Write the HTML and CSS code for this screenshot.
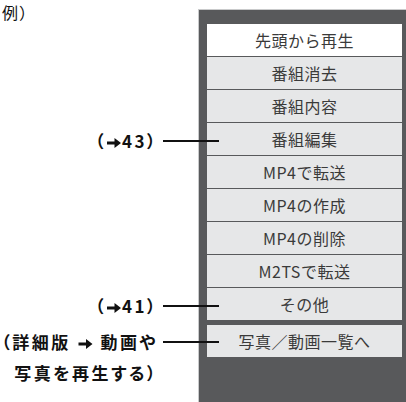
FILE: index.html
```html
<!DOCTYPE html>
<html>
<head>
	<meta charset="utf-8">
	<title>メニュー例</title>
	<link rel="stylesheet" href="styles.css">
</head>
<body>
	<div class="page">
		<div class="notes">
			<p class="example">例）</p>
			<div class="callout callout-edit">
				<p class="callout-text">（<svg class="arrow" viewBox="0 0 14 10"><path d="M0 3.5h7.5V0L14 5l-6.5 5V6.5H0z"/></svg>43）</p>
				<span class="leader"></span>
			</div>
			<div class="callout callout-other">
				<p class="callout-text">（<svg class="arrow" viewBox="0 0 14 10"><path d="M0 3.5h7.5V0L14 5l-6.5 5V6.5H0z"/></svg>41）</p>
				<span class="leader"></span>
			</div>
			<div class="callout callout-photo">
				<p class="callout-text">（詳細版 <svg class="arrow arrow-wide" viewBox="0 0 14 10"><path d="M0 3.5h7.5V0L14 5l-6.5 5V6.5H0z"/></svg> 動画や<br>写真を再生する）</p>
				<span class="leader"></span>
			</div>
		</div>

		<div class="panel">
			<div class="item item-first">先頭から再生</div>
			<div class="item">番組消去</div>
			<div class="item">番組内容</div>
			<div class="item">番組編集</div>
			<div class="item">MP4で転送</div>
			<div class="item">MP4の作成</div>
			<div class="item">MP4の削除</div>
			<div class="item">M2TSで転送</div>
			<div class="item">その他</div>
			<div class="item item-photo">写真／動画一覧へ</div>
		</div>
	</div>
</body>
</html>
```

FILE: styles.css
```css
body{
	margin: 0;
	background-color: #fff;
	font-family: "Noto Sans CJK JP", "Noto Sans", sans-serif;
	color: #111;
}
.page{
	display: flex;
	width: 406px;
	height: 402px;
	overflow: hidden;
}
.notes{
	width: 198px;
	flex-shrink: 0;
	display: grid;
	grid-template-rows: 24px 32px repeat(8, 33px) 5px 32px 1fr;
}
.example{
	margin: 0 0 0 2px;
	font-size: 16px;
	line-height: 24px;
	letter-spacing: 1px;
}
.callout{
	display: flex;
	justify-content: flex-end;
	align-items: flex-start;
	padding-top: 3px;
}
.callout-edit{
	grid-row: 5;
}
.callout-other{
	grid-row: 10;
}
.callout-photo{
	grid-row: 12 / span 2;
	padding-top: 1px;
}
.callout-text{
	margin: 0;
	font-size: 17px;
	font-weight: 700;
	line-height: 31px;
	letter-spacing: 2.5px;
	text-align: right;
	white-space: nowrap;
	font-feature-settings: "palt";
}
.arrow{
	width: 14px;
	height: 10px;
	margin: 0 1px;
	fill: #111;
	vertical-align: 0;
}
.arrow-wide{
	width: 15px;
}
.leader{
	position: relative;
	z-index: 2;
	flex-shrink: 0;
	width: 56px;
	height: 2px;
	margin: 15px -21px 0 5px;
	background-color: #111;
}
.panel{
	flex: 1;
	margin-top: 9px;
	padding: 14px 4px 0 8px;
	background-color: #58595b;
	border-top: 1px solid #c9cacb;
	border-left: 1px solid #c9cacb;
	display: flex;
	flex-direction: column;
}
.item{
	height: 32px;
	display: flex;
	align-items: center;
	justify-content: center;
	background-color: #e6e7e8;
	color: #3a3a3a;
	font-size: 16px;
	letter-spacing: 0.5px;
}
.item + .item{
	border-top: 1px solid #58595b;
}
.item-first{
	background-color: #fff;
}
.item.item-photo{
	margin-top: 5px;
	border-top: none;
}
```
